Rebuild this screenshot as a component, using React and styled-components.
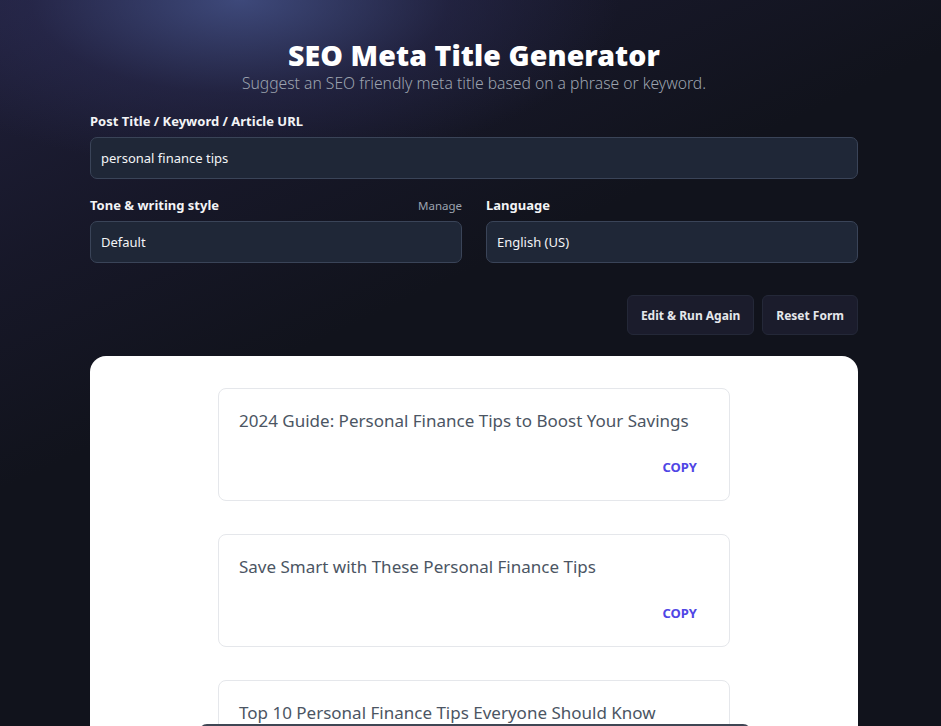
import React from 'react';
import styled, { createGlobalStyle } from 'styled-components';

const GlobalStyle = createGlobalStyle`
    html, body {
        margin: 0;
        padding: 0;
        background: #11131c;
        font-family: "Noto Sans", "Open Sans", sans-serif;
        overflow: hidden;
    }
`;

const Page = styled.div`
    min-height: 726px;
    background:
        radial-gradient(ellipse 380px 170px at 240px 0px, rgba(70, 84, 140, 0.8), rgba(50, 52, 100, 0.35) 55%, rgba(17, 19, 28, 0) 100%),
        linear-gradient(155deg, rgba(44, 42, 84, 0.55) 0%, rgba(34, 32, 64, 0.35) 22%, rgba(17, 19, 28, 0) 40%),
        #11131c;
    display: flex;
    justify-content: center;
    padding: 38px 0 0 7px;
    box-sizing: border-box;
`;

const Container = styled.div`
    width: 768px;
    display: flex;
    flex-direction: column;
`;

const Header = styled.header`
    text-align: center;
    margin-bottom: 18px;
`;

const Title = styled.h1`
    margin: 0;
    font-size: 28.5px;
    line-height: 34px;
    font-weight: 900;
    color: #ffffff;
    letter-spacing: 0.1px;
`;

const Subtitle = styled.p`
    margin: 0;
    font-size: 15.7px;
    line-height: 22px;
    font-weight: 300;
    color: #9ca3af;
`;

const Field = styled.div`
    display: flex;
    flex-direction: column;
    min-width: 0;
`;

const LabelRow = styled.div`
    display: flex;
    justify-content: space-between;
    align-items: baseline;
    height: 20px;
    margin-bottom: 5px;
`;

const Label = styled.label`
    font-size: 13px;
    font-weight: 700;
    color: #f3f4f6;
`;

const Manage = styled.span`
    font-size: 11.5px;
    color: #9ca3af;
`;

const Input = styled.div`
    height: 40px;
    border: 1px solid #3a4458;
    border-radius: 7px;
    background: #1f2737;
    color: #f3f4f6;
    font-size: 13px;
    display: flex;
    align-items: center;
    padding: 0 10px;
`;

const Row = styled.div`
    display: grid;
    grid-template-columns: 1fr 1fr;
    gap: 24px;
    margin-top: 17px;
`;

const Actions = styled.div`
    display: flex;
    justify-content: flex-end;
    gap: 8px;
    margin-top: 32px;
`;

const Button = styled.button`
    height: 40px;
    padding: 0 13px;
    border: 1px solid #242838;
    border-radius: 6px;
    background: #1b1c2c;
    color: #e5e7eb;
    font-family: inherit;
    font-size: 12px;
    font-weight: 700;
`;

const Results = styled.section`
    margin-top: 21px;
    background: #ffffff;
    border-radius: 16px 16px 0 0;
    padding: 32px 0 0;
    display: flex;
    flex-direction: column;
    align-items: center;
    gap: 33px;
    height: 400px;
`;

const ResultCard = styled.div`
    width: 512px;
    box-sizing: border-box;
    height: 113px;
    flex-shrink: 0;
    border: 1px solid #e5e7eb;
    border-radius: 8px;
    padding: 18px 32px 0 20px;
    display: flex;
    flex-direction: column;
`;

const ResultText = styled.p`
    margin: 0;
    font-size: 17px;
    line-height: 28px;
    color: #4b5563;
`;

const CopyButton = styled.button`
    align-self: flex-end;
    margin-top: 23px;
    border: 0;
    background: none;
    padding: 0;
    font-family: inherit;
    font-size: 13px;
    font-weight: 700;
    color: #4f46e5;
`;

const BottomBar = styled.div`
    position: fixed;
    left: 199px;
    width: 552px;
    bottom: -40px;
    height: 42px;
    border-radius: 8px;
    background: #3f4654;
`;

const titles = [
    '2024 Guide: Personal Finance Tips to Boost Your Savings',
    'Save Smart with These Personal Finance Tips',
    'Top 10 Personal Finance Tips Everyone Should Know',
];

export default function App() {
    return (
        <>
            <GlobalStyle />
            <Page>
                <Container>
                    <Header>
                        <Title>SEO Meta Title Generator</Title>
                        <Subtitle>Suggest an SEO friendly meta title based on a phrase or keyword.</Subtitle>
                    </Header>

                    <Field>
                        <LabelRow>
                            <Label>Post Title / Keyword / Article URL</Label>
                        </LabelRow>
                        <Input>personal finance tips</Input>
                    </Field>

                    <Row>
                        <Field>
                            <LabelRow>
                                <Label>Tone &amp; writing style</Label>
                                <Manage>Manage</Manage>
                            </LabelRow>
                            <Input>Default</Input>
                        </Field>
                        <Field>
                            <LabelRow>
                                <Label>Language</Label>
                            </LabelRow>
                            <Input>English (US)</Input>
                        </Field>
                    </Row>

                    <Actions>
                        <Button>Edit &amp; Run Again</Button>
                        <Button>Reset Form</Button>
                    </Actions>

                    <Results>
                        {titles.map((t) => (
                            <ResultCard key={t}>
                                <ResultText>{t}</ResultText>
                                <CopyButton>COPY</CopyButton>
                            </ResultCard>
                        ))}
                    </Results>
                </Container>
            </Page>
            <BottomBar />
        </>
    );
}
